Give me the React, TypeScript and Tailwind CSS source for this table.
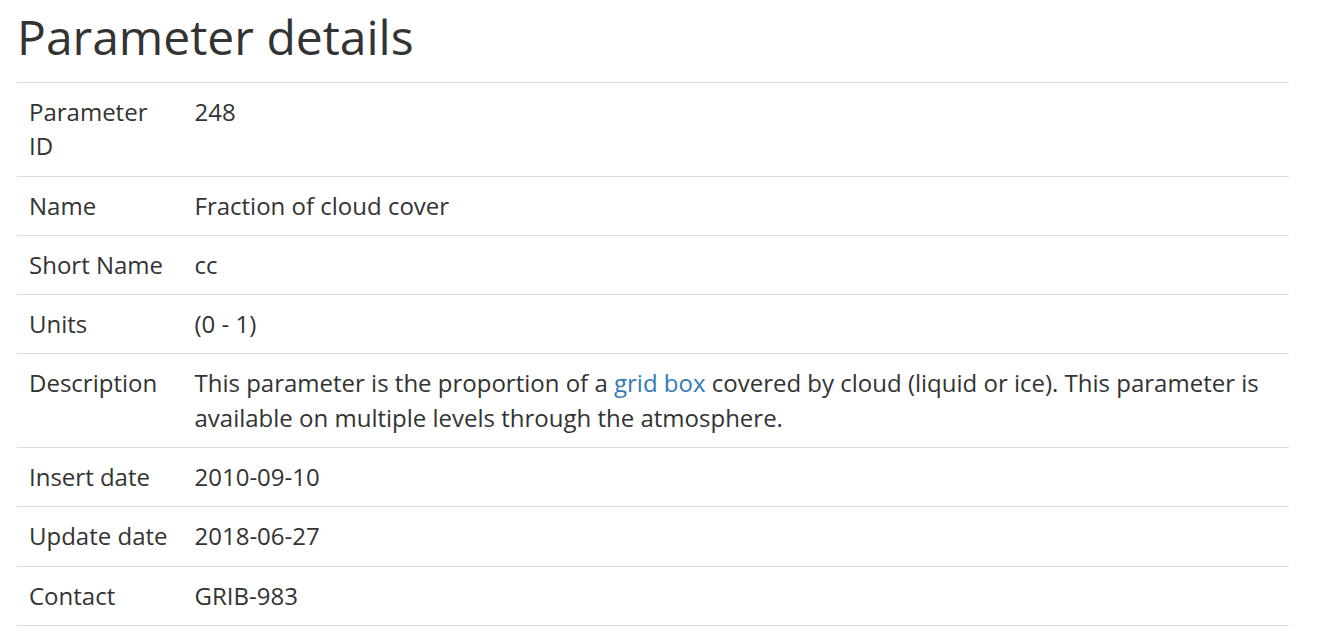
const rows: { label: string; value: React.ReactNode }[] = [
  { label: "Parameter ID", value: "248" },
  { label: "Name", value: "Fraction of cloud cover" },
  { label: "Short Name", value: "cc" },
  { label: "Units", value: "(0 - 1)" },
  {
    label: "Description",
    value: (
      <>
        This parameter is the proportion of a{" "}
        <a href="#" className="text-[#337ab7]">
          grid box
        </a>{" "}
        covered by cloud (liquid or ice). This parameter is available on multiple levels through the atmosphere.
      </>
    ),
  },
  { label: "Insert date", value: "2010-09-10" },
  { label: "Update date", value: "2018-06-27" },
  { label: "Contact", value: "GRIB-983" },
];

export default function App() {
  return (
    <div className="bg-white min-h-screen pl-[17px] pr-[32px] text-[#333] font-['Open_Sans',sans-serif]">
      <h1 className="pt-[10px] mb-[19px] text-[48px] leading-[53px] font-normal">Parameter details</h1>

      {/* details table */}
      <table className="w-full border-collapse text-[24px] leading-[1.42857]">
        <tbody>
          {rows.map((row) => (
            <tr key={row.label} className="border-t border-[#ddd] last:border-b">
              <td className="w-[165.5px] px-[12px] py-[12px] align-top">{row.label}</td>
              <td className="px-[12px] py-[12px] align-top">{row.value}</td>
            </tr>
          ))}
        </tbody>
      </table>
    </div>
  );
}
